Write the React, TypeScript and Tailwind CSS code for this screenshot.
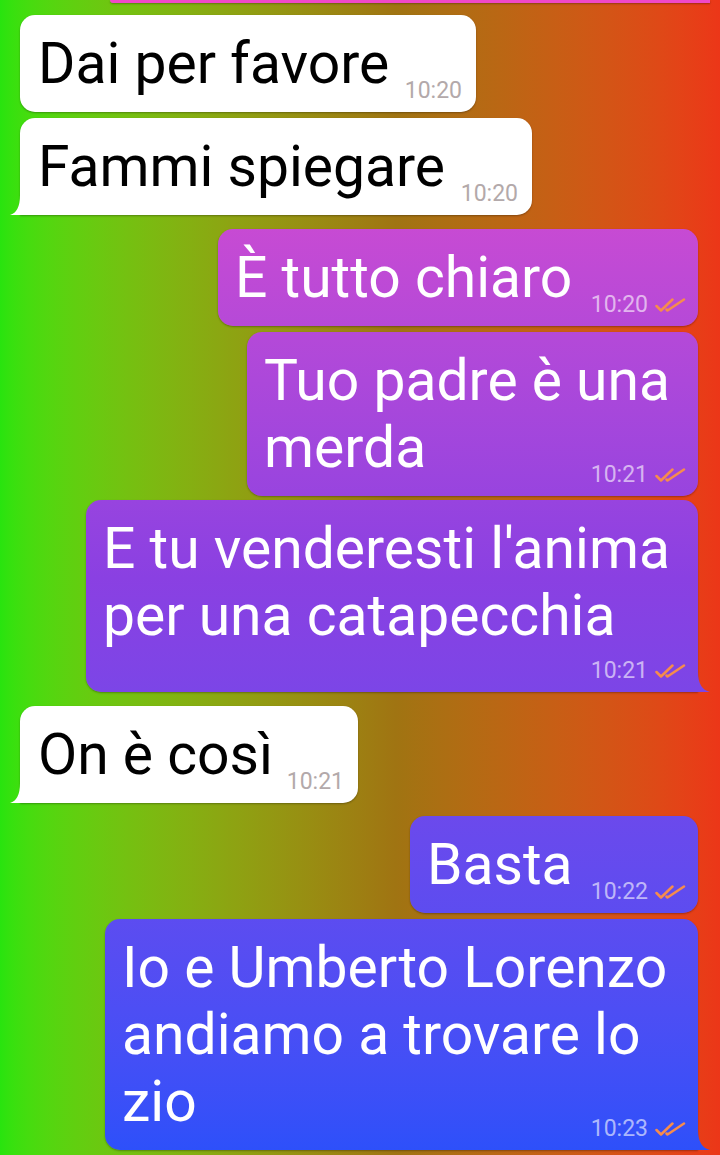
import React from 'react';

type Msg = {
  out:        boolean;
  lines:      string[];
  time:       string;
  width:      string;
  tail?:      boolean;
  timeBelow?: boolean;
  mt:         string;
};

const messages: Msg[] = [
  { out: false, lines: ['Dai per favore'], time: '10:20', width: 'w-[456px]', mt: 'mt-[12px]' },
  { out: false, lines: ['Fammi spiegare'], time: '10:20', width: 'w-[512px]', tail: true, mt: 'mt-[6px]' },
  { out: true,  lines: ['È tutto chiaro'], time: '10:20', width: 'w-[480px]', mt: 'mt-[14px]' },
  { out: true,  lines: ['Tuo padre è una', 'merda'], time: '10:21', width: 'w-[451px]', mt: 'mt-[6px]' },
  { out: true,  lines: ["E tu venderesti l'anima", 'per una catapecchia'], time: '10:21', width: 'w-[612px]', tail: true, timeBelow: true, mt: 'mt-[4px]' },
  { out: false, lines: ['On è così'], time: '10:21', width: 'w-[338px]', tail: true, mt: 'mt-[14px]' },
  { out: true,  lines: ['Basta'], time: '10:22', width: 'w-[288px]', mt: 'mt-[13px]' },
  { out: true,  lines: ['Io e Umberto Lorenzo', 'andiamo a trovare lo', 'zio'], time: '10:23', width: 'w-[593px]', tail: true, mt: 'mt-[6px]' },
];

// outgoing bubbles share one gradient pinned to the viewport
const outBg = 'bg-linear-to-b from-[#f048c8] via-[#8a40e2] to-[#2c50fa] bg-fixed';

const Ticks = () => (
  <svg width="31" height="15" viewBox="0 0 31 15" fill="none" stroke="#f68c4c" strokeWidth="2.5" strokeLinecap="round" strokeLinejoin="round">
    <path d="M1.5 8 L6 12.5 L17.5 1.5" />
    <path d="M11.5 11.5 L12.5 12.5 L29 1.5" />
  </svg>
);

const Bubble = ({ m }: { m: Msg }) => {
  const shape = m.out
    ? m.tail ? 'rounded-[15px] rounded-br-none' : 'rounded-[15px]'
    : m.tail ? 'rounded-[15px] rounded-bl-none' : 'rounded-[15px]';

  return (
    <div
      className={`${m.width} ${shape} ${m.out ? `${outBg} text-white pl-[17px] pr-[12px]` : 'bg-white text-black pl-[18px] pr-[14px]'} pt-[15px] pb-[8px] grid shadow-[0_1px_2px_rgba(0,0,0,0.3)]`}
    >
      <div className={`[grid-area:1/1] text-[57px] leading-[67px] whitespace-nowrap ${m.timeBelow ? '' : 'mb-[7px]'}`}>
        {m.lines.map((l, i) => (
          <div key={i}>{l}</div>
        ))}
      </div>
      <div
        className={`${m.timeBelow ? '[grid-area:2/1] mt-[9px]' : '[grid-area:1/1]'} self-end justify-self-end flex items-center gap-[7px] text-[23px] leading-[26px] ${m.out ? 'text-white/60' : 'text-[#b3a9aa]'}`}
      >
        <span>{m.time}</span>
        {m.out && <Ticks />}
      </div>
    </div>
  );
};

const Tail = ({ out }: { out: boolean }) =>
  out ? (
    <div className={`w-[12px] h-[20px] self-end ${outBg} [clip-path:path('M0_0_Q0_17_12_20_L0_20_Z')]`} />
  ) : (
    <div className="w-[10px] h-[20px] self-end bg-white [clip-path:path('M10_0_Q10_17_0_20_L10_20_Z')]" />
  );

export default function App() {
  return (
    <div
      className="w-[720px] h-[1155px] overflow-hidden flex flex-col bg-linear-to-r from-[#28e40e] via-[#a07412] via-55% to-[#ec3618]"
      style={{ fontFamily: 'Roboto, "Noto Sans", sans-serif' }}
    >
      {/* tail end of the previous outgoing bubble */}
      <div className="flex justify-end pr-[10px]">
        <div className={`w-[600px] h-[3px] rounded-bl-[6px] ${outBg} shadow-[0_1px_2px_rgba(0,0,0,0.3)]`} />
      </div>

      {messages.map((m, i) => (
        <div
          key={i}
          className={`flex ${m.mt} ${m.out ? `justify-end ${m.tail ? 'pr-[10px]' : 'pr-[22px]'}` : `justify-start ${m.tail ? 'pl-[10px]' : 'pl-[20px]'}`}`}
        >
          {!m.out && m.tail && <Tail out={false} />}
          <Bubble m={m} />
          {m.out && m.tail && <Tail out={true} />}
        </div>
      ))}
    </div>
  );
}
